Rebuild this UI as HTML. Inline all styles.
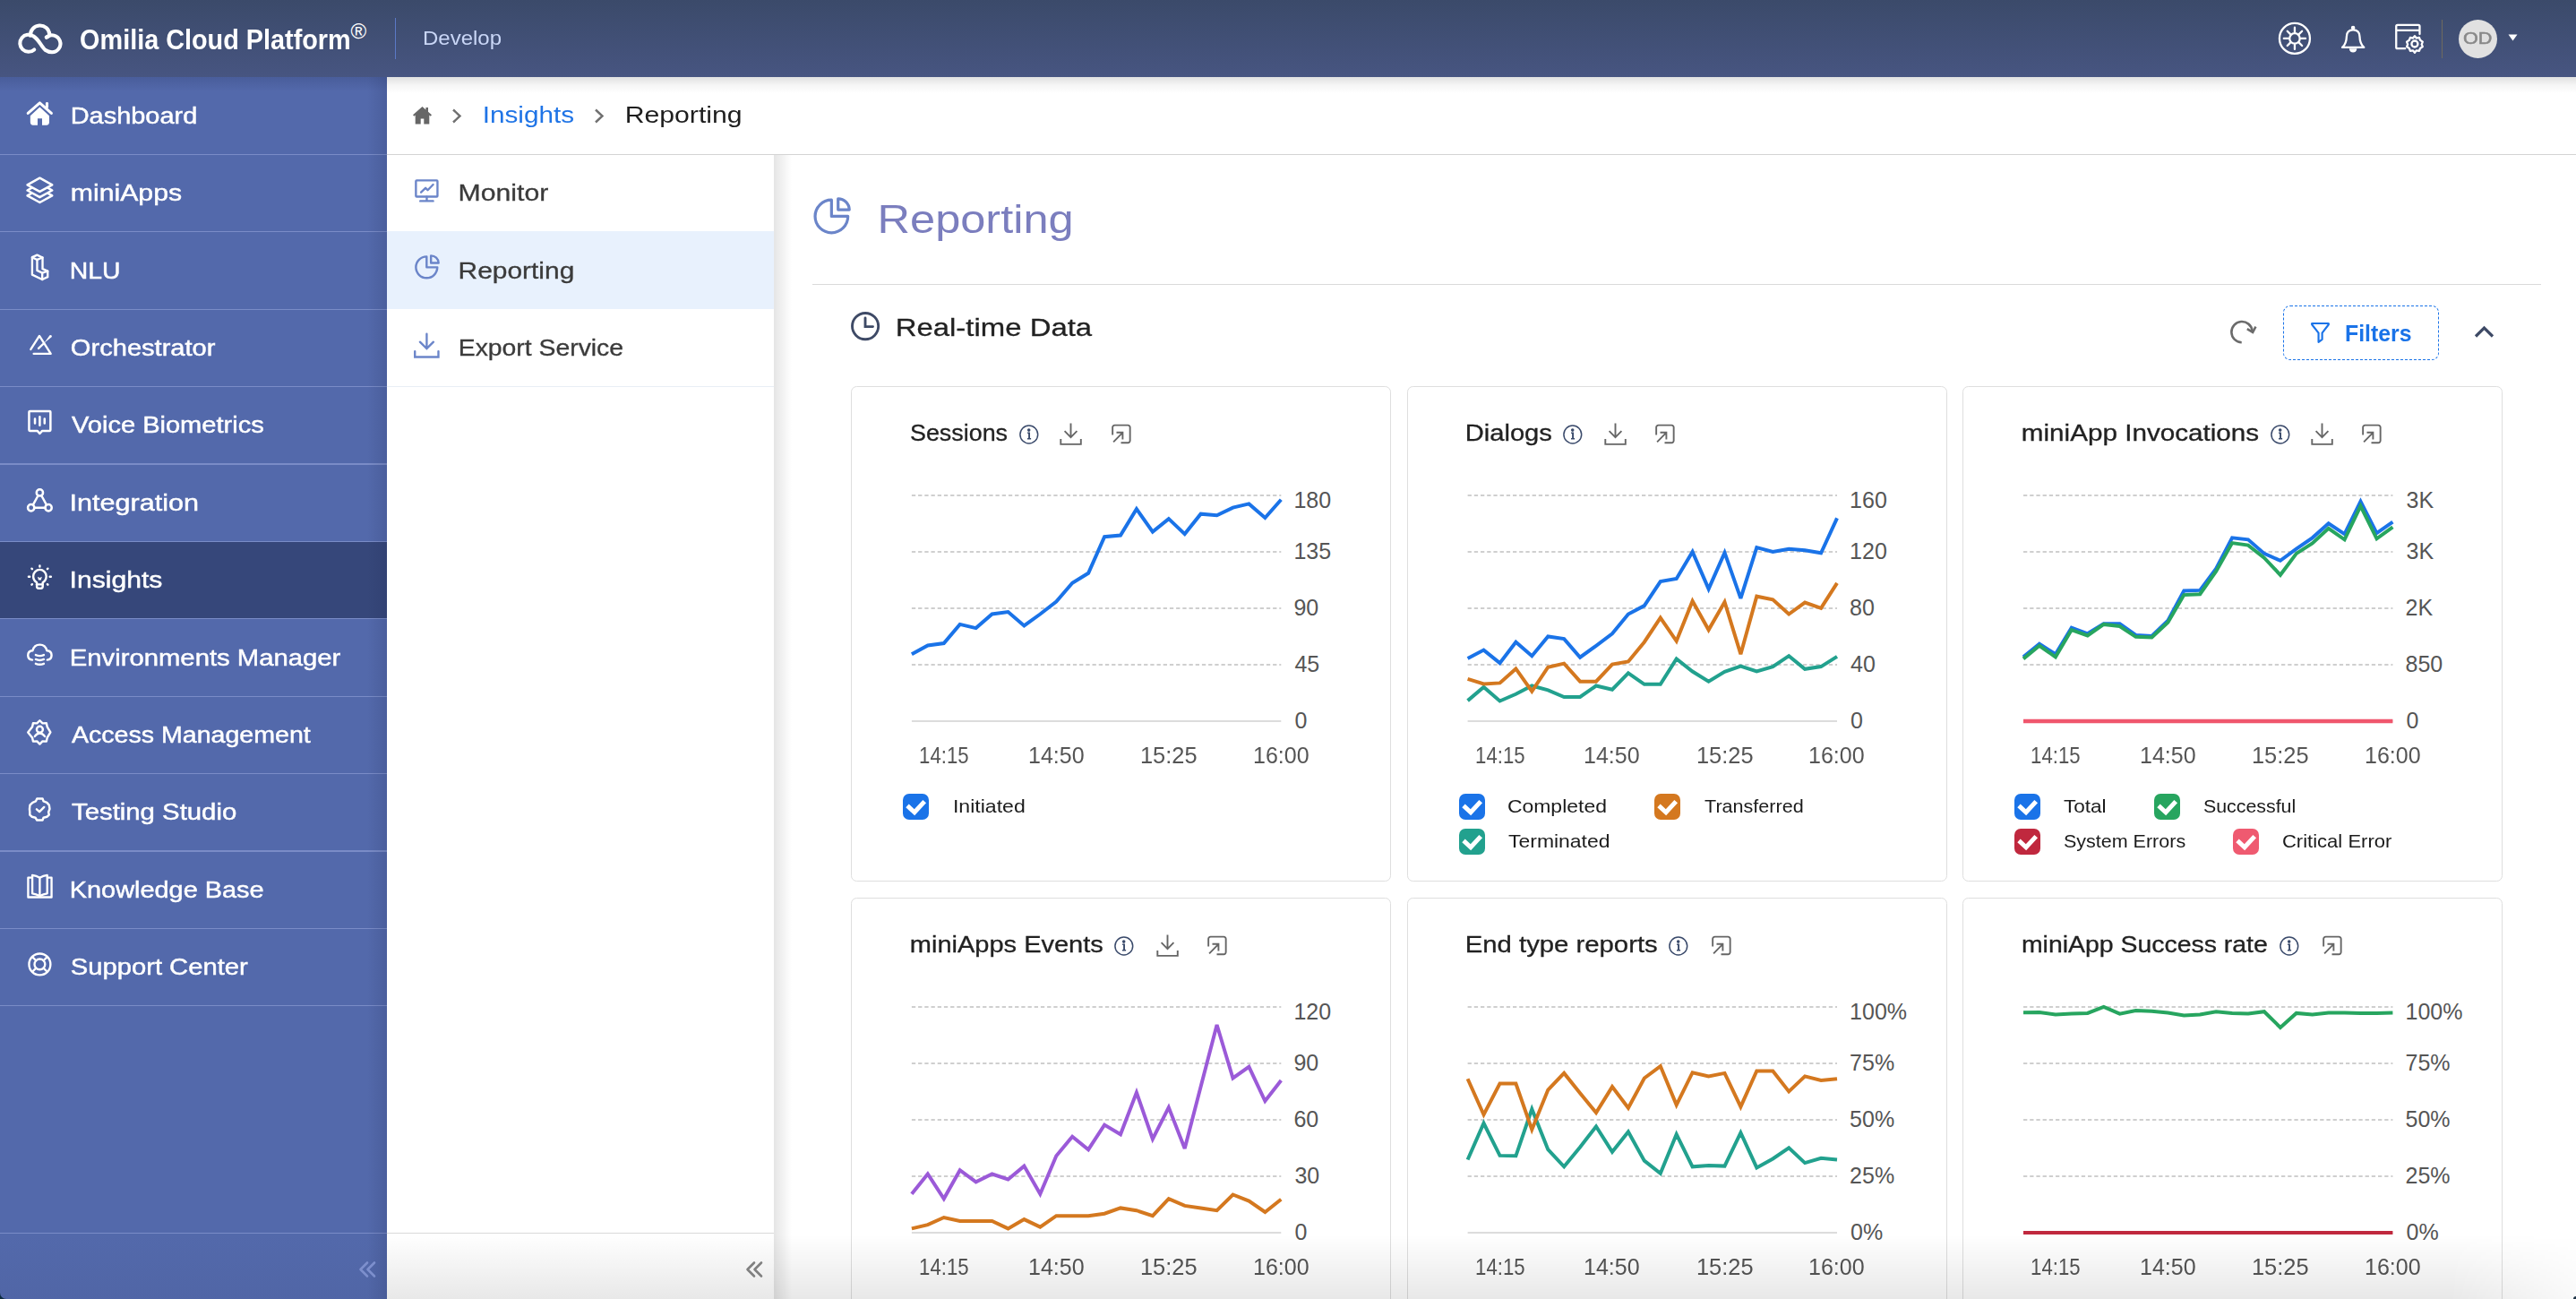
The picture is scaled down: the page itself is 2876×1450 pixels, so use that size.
<!DOCTYPE html>
<html><head><meta charset="utf-8"><style>
*{box-sizing:border-box;margin:0;padding:0}
html,body{width:2876px;height:1450px;overflow:hidden;background:#fff}
body{position:relative;font-family:"Liberation Sans",sans-serif}
.t{position:absolute;white-space:nowrap;line-height:1}
.ic{position:absolute;overflow:visible}
.cb{position:absolute;width:29px;height:29px;border-radius:7px}
.cb svg{position:absolute;left:0;top:0}
#hdr{position:absolute;left:0;top:0;width:2876px;height:86px;background:linear-gradient(180deg,#3b4a6a 0%,#475581 100%)}
#side{position:absolute;left:0;top:86px;width:432px;height:1364px;background:#5369ab;border-bottom-left-radius:7px}
.sep{position:absolute;left:0;width:432px;height:1.3px;background:#7a8cc7}
#sec{position:absolute;left:432px;top:173.3px;width:432px;height:1277px;background:#fff}
.sec2{position:absolute;left:432px;width:432px;height:1px;background:#e9eef5}
.card{position:absolute;width:603px;border:1.1px solid #dedede;border-radius:6.5px;background:#fff}
</style></head><body>
<div id="hdr"></div>
<svg class="ic" style="left:15px;top:20px;width:60px;height:46px" viewBox="0 0 1694 1299"><path d="M655 1000A270 270 0 1 1 630 576C800 670 870 900 1000 1010Q1100 1080 1215 1080A267 267 0 1 0 1040 610" fill="none" stroke="#fff" stroke-width="115" stroke-linecap="round"/><path d="M535 560A301 301 0 0 1 1137 520Q1130 575 1040 610" fill="none" stroke="#fff" stroke-width="115" stroke-linecap="round"/></svg>
<div class="t" style="left:391.5px;top:23px;font-size:24px;color:#fff">&#174;</div>
<div style="position:absolute;left:441px;top:20.4px;width:1.3px;height:46px;background:#5b79c6"></div>
<!-- header right icons -->
<svg class="ic" style="left:2538px;top:20px;width:48px;height:48px" viewBox="0 0 1299 1299"><g fill="none" stroke="#fff" stroke-width="62" stroke-linecap="round"><circle cx="648" cy="620" r="460"/><circle cx="648" cy="620" r="155"/><path d="M648 290V430M648 810V945M320 620H460M835 620H975M425 400L510 485M785 755L870 840M425 840L510 755M785 485L870 400"/></g></svg>
<svg class="ic" style="left:2604px;top:20px;width:48px;height:48px" viewBox="0 0 1299 1299"><g fill="none" stroke="#fff" stroke-width="62" stroke-linejoin="round"><path d="M625 360Q435 360 430 560Q425 780 300 890H955Q830 780 825 560Q820 360 625 360Z"/></g><circle cx="625" cy="300" r="62" fill="#fff"/><path d="M510 925A115 115 0 0 0 740 925Z" fill="#fff"/></svg>
<svg class="ic" style="left:2666px;top:20px;width:48px;height:48px" viewBox="0 0 1299 1299"><g fill="none" stroke="#fff" stroke-width="62" stroke-linecap="round" stroke-linejoin="round"><path d="M520 925H290Q250 925 250 885V255Q250 215 290 215H920Q960 215 960 255V490M250 375H940"/><path d="M810 545L860 610L945 590L975 670L1050 720L1020 800L1050 870L975 920L945 1000L860 985L810 1050L760 985L675 1000L645 920L570 870L600 800L570 720L645 670L675 590L760 610Z"/><circle cx="810" cy="785" r="95"/></g></svg>
<div style="position:absolute;left:2725.5px;top:22px;width:1.3px;height:43px;background:#6e6a5e"></div>
<div style="position:absolute;left:2745px;top:22px;width:43px;height:43px;border-radius:50%;background:#e1e1e1"></div>
<svg class="ic" style="left:2800px;top:38px;width:11px;height:8px" viewBox="0 0 11 8"><path d="M0.5 0.5H10.5L5.5 7.5Z" fill="#fff"/></svg>

<div style="position:absolute;left:0;top:1420px;width:20px;height:30px;background:#0b2b3f"></div>
<div id="side"></div>
<div style="position:absolute;left:0;top:86px;width:432px;height:16px;background:linear-gradient(180deg,rgba(20,30,70,0.16),rgba(20,30,70,0))"></div>
<div style="position:absolute;left:0;top:604.4px;width:432px;height:85.8px;background:#36477a"></div>
<div class="sep" style="top:171.8px"></div><div class="sep" style="top:258.2px"></div><div class="sep" style="top:344.6px"></div><div class="sep" style="top:431.0px"></div><div class="sep" style="top:517.4px"></div><div class="sep" style="top:603.8px"></div><div class="sep" style="top:690.2px"></div><div class="sep" style="top:776.6px"></div><div class="sep" style="top:863.0px"></div><div class="sep" style="top:949.4px"></div><div class="sep" style="top:1035.8px"></div><div class="sep" style="top:1122.2px"></div>
<div class="sep" style="top:1375.6px"></div>
<div style="position:absolute;left:410px;top:86px;width:22px;height:1364px;background:linear-gradient(90deg,rgba(30,40,80,0) 0%,rgba(30,40,80,0.16) 100%)"></div>
<div style="position:absolute;left:0;top:1376px;width:432px;height:74px;background:linear-gradient(180deg,rgba(40,50,90,0) 0%,rgba(40,50,90,0.06) 100%)"></div>
<svg class="ic" style="left:400px;top:1408px;width:20px;height:18px" viewBox="0 0 20 18"><path d="M10 1.5L2.5 9L10 16.5M18 1.5L10.5 9L18 16.5" fill="none" stroke="#7d8fcd" stroke-width="2.6" stroke-linecap="round" stroke-linejoin="round"/></svg>
<svg class="ic" style="left:25.0px;top:105.0px;width:45px;height:45px" viewBox="0 0 1299 1299"><path d="M180 620L560 285L935 620" fill="none" stroke="#fff" stroke-width="88" stroke-linecap="round" stroke-linejoin="round"/><rect x="748" y="262" width="90" height="200" rx="40" fill="#fff"/><path d="M255 700L560 415L865 700V910Q865 1000 775 1000H635V785H490V1000H345Q255 1000 255 910Z" fill="#fff"/></svg><svg class="ic" style="left:25.0px;top:190.0px;width:45px;height:45px" viewBox="0 0 1299 1299"><g fill="none" stroke="#fff" stroke-linecap="round" stroke-linejoin="round" stroke-width="72"><path d="M560 250L960 475L560 690L160 475Z"/><path d="M290 575L160 650L560 870L960 650L830 575"/><path d="M290 745L160 820L560 1040L960 820L830 745"/></g></svg><svg class="ic" style="left:25.0px;top:278.0px;width:45px;height:45px" viewBox="0 0 1299 1299"><g fill="none" stroke="#fff" stroke-linecap="round" stroke-linejoin="round" stroke-width="68"><path d="M315 265L475 192L650 275V640L815 712V900L640 982L315 825Z"/><path d="M315 265L475 345L650 275"/><path d="M475 345V690L640 770L815 712"/><path d="M640 770V982"/></g></svg><svg class="ic" style="left:25.0px;top:365.0px;width:45px;height:45px" viewBox="0 0 1299 1299"><g fill="none" stroke="#fff" stroke-linecap="round" stroke-linejoin="round" stroke-width="68"><path d="M270 720L548 285L915 862H365"/><path d="M520 690L700 520"/></g><path d="M700 520L880 265Q960 250 950 320L760 470Z" fill="#fff"/></svg><svg class="ic" style="left:25.0px;top:452.0px;width:45px;height:45px" viewBox="0 0 1299 1299"><g fill="none" stroke="#fff" stroke-linecap="round" stroke-linejoin="round" stroke-width="72"><path d="M250 200H880Q905 200 905 225V810Q905 835 880 835H640L560 925L480 835H240Q215 835 215 810V225Q215 200 250 200Z"/><path d="M405 450V590M560 385V660M715 450V590"/></g></svg><svg class="ic" style="left:25.0px;top:538.0px;width:45px;height:45px" viewBox="0 0 1299 1299"><g fill="none" stroke="#fff" stroke-linecap="round" stroke-linejoin="round" stroke-width="72"><circle cx="560" cy="345" r="105"/><circle cx="280" cy="830" r="105"/><circle cx="840" cy="830" r="105"/><path d="M505 440L345 730M615 440L775 730M385 830H735"/></g></svg><svg class="ic" style="left:25.0px;top:625.0px;width:45px;height:45px" viewBox="0 0 1299 1299"><g fill="none" stroke="#fff" stroke-linecap="round" stroke-linejoin="round" stroke-width="70"><path d="M465 730Q350 650 350 525A210 210 0 0 1 770 525Q770 650 655 730V860Q655 915 600 915H520Q465 915 465 860Z"/><path d="M465 790H655"/><path d="M560 190V215M300 280L315 295M820 280L805 295M200 540H235M885 540H920M300 800L315 785M820 800L805 785"/></g><path d="M490 540L560 580L630 540L600 650H520Z" fill="#fff"/></svg><svg class="ic" style="left:25.0px;top:711.0px;width:45px;height:45px" viewBox="0 0 1299 1299"><g fill="none" stroke="#fff" stroke-linecap="round" stroke-linejoin="round" stroke-width="70"><path d="M320 740Q180 720 180 590Q180 450 330 440Q380 250 560 250Q740 250 790 440Q940 450 940 590Q940 720 800 740"/><path d="M430 580Q560 640 690 580M430 720Q560 780 690 720M430 860Q560 920 690 860"/></g></svg><svg class="ic" style="left:25.0px;top:798.0px;width:45px;height:45px" viewBox="0 0 1299 1299"><g fill="none" stroke="#fff" stroke-linecap="round" stroke-linejoin="round" stroke-width="70"><path d="M560 180L650 270L775 265L800 385L905 560L800 735L775 855L650 850L560 940L470 850L345 855L320 735L180 560L320 385L345 265L470 270Z"/><circle cx="560" cy="470" r="100"/><path d="M400 690Q470 590 560 590Q650 590 720 690"/></g></svg><svg class="ic" style="left:25.0px;top:884.0px;width:45px;height:45px" viewBox="0 0 1299 1299"><g fill="none" stroke="#fff" stroke-linecap="round" stroke-linejoin="round" stroke-width="70"><path d="M470 215H650L680 300L790 345L860 420L880 550L840 650L860 740L790 800L680 830L650 910H470L420 830L310 800L240 740L240 650L230 550L245 420L330 340L430 300Z"/><path d="M460 560L550 640L700 490"/></g></svg><svg class="ic" style="left:25.0px;top:971.0px;width:45px;height:45px" viewBox="0 0 1299 1299"><g fill="none" stroke="#fff" stroke-linecap="round" stroke-linejoin="round" stroke-width="68"><path d="M300 250H185V880H940V250H815"/><path d="M320 170Q450 190 560 250Q670 190 800 170V760Q680 780 560 840Q440 780 320 760Z"/><path d="M560 250V840"/></g></svg><svg class="ic" style="left:25.0px;top:1057.0px;width:45px;height:45px" viewBox="0 0 1299 1299"><g fill="none" stroke="#fff" stroke-linecap="round" stroke-linejoin="round" stroke-width="68"><circle cx="560" cy="560" r="345"/><circle cx="560" cy="560" r="170"/><path d="M320 320L440 440M800 320L680 440M320 800L440 680M800 800L680 680"/></g></svg>

<!-- breadcrumb -->
<div style="position:absolute;left:432px;top:86px;width:2444px;height:87px;background:#fff;border-bottom:1.2px solid #d4d4d4"></div>
<div style="position:absolute;left:432px;top:86px;width:2444px;height:18px;background:linear-gradient(180deg,rgba(0,0,0,0.12),rgba(0,0,0,0.04) 50%,rgba(0,0,0,0))"></div>
<svg class="ic" style="left:460px;top:118px;width:23px;height:21px" viewBox="0 0 23 21"><path d="M11.5 1L1 10.3l1.3 1.4 1.4-1.2V20.5h6v-6h3.6v6h6V10.5l1.4 1.2L22 10.3 18 6.8V2h-2.6v2.5Z" fill="#666"/></svg>
<svg class="ic" style="left:504px;top:121px;width:12px;height:17px" viewBox="0 0 12 17"><path d="M2 1.5L9.5 8.5L2 15.5" fill="none" stroke="#707070" stroke-width="2.4"/></svg>
<svg class="ic" style="left:663px;top:121px;width:12px;height:17px" viewBox="0 0 12 17"><path d="M2 1.5L9.5 8.5L2 15.5" fill="none" stroke="#707070" stroke-width="2.4"/></svg>

<!-- secondary nav -->
<div id="sec"></div>
<div style="position:absolute;left:432px;top:258.4px;width:432px;height:86.6px;background:#e8f1fd"></div>
<div class="sec2" style="top:431px"></div>
<div class="sec2" style="top:1376px;background:#d9d9d9"></div>
<div style="position:absolute;left:432px;top:1377px;width:432px;height:73px;background:linear-gradient(180deg,rgba(0,0,0,0) 0%,rgba(0,0,0,0.09) 100%)"></div>
<svg class="ic" style="left:832px;top:1408px;width:20px;height:18px" viewBox="0 0 20 18"><path d="M10 1.5L2.5 9L10 16.5M18 1.5L10.5 9L18 16.5" fill="none" stroke="#808080" stroke-width="2.6" stroke-linecap="round" stroke-linejoin="round"/></svg>
<div style="position:absolute;left:864px;top:173.3px;width:20px;height:1277px;background:linear-gradient(90deg,rgba(0,0,0,0.10),rgba(0,0,0,0))"></div>
<svg class="ic" style="left:455px;top:192px;width:45px;height:45px" viewBox="0 0 1299 1299"><g fill="none" stroke="#6b85c9" stroke-width="68" stroke-linecap="round" stroke-linejoin="round"><rect x="270" y="270" width="695" height="525" rx="25"/><path d="M620 800V930M410 935H825M435 655L580 515L650 585L825 405"/></g></svg>
<svg class="ic" style="left:455px;top:276px;width:45px;height:45px" viewBox="0 0 1299 1299"><g fill="none" stroke="#6b85c9" stroke-width="70" stroke-linejoin="round"><path d="M615 300A345 345 0 1 0 960 645H615Z"/><path d="M755 270V505H1000A245 245 0 0 0 755 270Z"/></g></svg>
<svg class="ic" style="left:455px;top:363px;width:45px;height:45px" viewBox="0 0 1299 1299"><g fill="none" stroke="#6b85c9" stroke-width="68" stroke-linecap="round"><path d="M618 280V740M400 540L618 755L835 540M237 840V1025H995V840"/></g></svg>

<!-- main title -->
<svg class="ic" style="left:900px;top:212px;width:58px;height:58px" viewBox="0 0 1299 1299"><g fill="none" stroke="#6b85c9" stroke-width="72" stroke-linejoin="round"><path d="M635 250A410 410 0 1 0 1045 660H635Z"/><path d="M800 220V495H1080A280 280 0 0 0 800 220Z"/></g></svg>
<div style="position:absolute;left:907px;top:316.6px;width:1930px;height:1.1px;background:#dadada"></div>
<svg class="ic" style="left:942px;top:340px;width:48px;height:48px" viewBox="0 0 1299 1299"><g fill="none" stroke="#3e4a66" stroke-width="78" stroke-linecap="round"><circle cx="652" cy="652" r="395"/><path d="M650 405V665H880"/></g></svg>
<svg class="ic" style="left:2480px;top:347px;width:48px;height:48px" viewBox="0 0 1299 1299"><g fill="none" stroke="#6b6b6b" stroke-width="70"><path d="M615 955A315 315 0 1 1 935 600"/><path d="M780 545L950 645L1040 480"/></g></svg>
<div style="position:absolute;left:2549px;top:341px;width:174px;height:61px;border:1.6px dashed #1a73e8;border-radius:8px"></div>
<svg class="ic" style="left:2566px;top:347px;width:48px;height:48px" viewBox="0 0 1299 1299"><g fill="none" stroke="#1a73e8" stroke-width="58" stroke-linejoin="round"><path d="M420 380H900Q930 380 910 420L720 665V860L610 945V665L415 420Q395 380 420 380Z"/></g></svg>
<svg class="ic" style="left:2762px;top:362px;width:23px;height:17px" viewBox="0 0 23 17"><path d="M2 13.5L11.5 4L21 13.5" fill="none" stroke="#3e4a66" stroke-width="3.2"/></svg>

<!-- cards -->
<div class="card" style="left:950px;top:430.9px;height:553.2px"></div>
<div class="card" style="left:1570.9px;top:430.9px;height:553.2px"></div>
<div class="card" style="left:2191.4px;top:430.9px;height:553.2px"></div>
<div class="card" style="left:950px;top:1001.8px;height:600px"></div>
<div class="card" style="left:1570.9px;top:1001.8px;height:600px"></div>
<div class="card" style="left:2191.4px;top:1001.8px;height:600px"></div>
<svg class="ic" style="left:0;top:0;width:2876px;height:1450px" viewBox="0 0 2876 1450"><line x1="1017.9" y1="553.0" x2="1430.3" y2="553.0" stroke="#cfcfcf" stroke-width="2" stroke-dasharray="4.3 2.9"/><line x1="1017.9" y1="616.0" x2="1430.3" y2="616.0" stroke="#cfcfcf" stroke-width="2" stroke-dasharray="4.3 2.9"/><line x1="1017.9" y1="679.0" x2="1430.3" y2="679.0" stroke="#cfcfcf" stroke-width="2" stroke-dasharray="4.3 2.9"/><line x1="1017.9" y1="742.0" x2="1430.3" y2="742.0" stroke="#cfcfcf" stroke-width="2" stroke-dasharray="4.3 2.9"/><line x1="1017.9" y1="805.0" x2="1430.3" y2="805.0" stroke="#dcdcdc" stroke-width="2"/><polyline points="1017.9,730.2 1035.8,720.4 1053.8,718.1 1071.7,696.9 1089.6,701.1 1107.6,685.5 1125.5,683.0 1143.4,698.4 1161.3,685.5 1179.3,671.6 1197.2,650.8 1215.1,639.8 1233.1,599.2 1251.0,597.6 1268.9,568.1 1286.9,593.6 1304.8,579.1 1322.7,596.1 1340.6,573.7 1358.6,575.3 1376.5,566.6 1394.4,562.4 1412.4,578.0 1430.3,557.7" fill="none" stroke="#1a73e8" stroke-width="4" stroke-linejoin="miter" stroke-miterlimit="3"/><line x1="1638.6" y1="553.0" x2="2051.0" y2="553.0" stroke="#cfcfcf" stroke-width="2" stroke-dasharray="4.3 2.9"/><line x1="1638.6" y1="616.0" x2="2051.0" y2="616.0" stroke="#cfcfcf" stroke-width="2" stroke-dasharray="4.3 2.9"/><line x1="1638.6" y1="679.0" x2="2051.0" y2="679.0" stroke="#cfcfcf" stroke-width="2" stroke-dasharray="4.3 2.9"/><line x1="1638.6" y1="742.0" x2="2051.0" y2="742.0" stroke="#cfcfcf" stroke-width="2" stroke-dasharray="4.3 2.9"/><line x1="1638.6" y1="805.0" x2="2051.0" y2="805.0" stroke="#dcdcdc" stroke-width="2"/><polyline points="1638.6,782.1 1656.5,767.0 1674.5,782.5 1692.4,774.8 1710.3,765.5 1728.3,770.3 1746.2,778.0 1764.1,778.0 1782.0,765.5 1800.0,769.7 1817.9,751.4 1835.8,763.8 1853.8,763.8 1871.7,735.4 1889.6,749.5 1907.6,760.7 1925.5,749.9 1943.4,743.7 1961.3,749.5 1979.3,744.1 1997.2,732.2 2015.1,746.8 2033.1,744.1 2051.0,732.9" fill="none" stroke="#22a18e" stroke-width="4" stroke-linejoin="miter" stroke-miterlimit="3"/><polyline points="1638.6,757.8 1656.5,763.4 1674.5,762.4 1692.4,746.4 1710.3,771.7 1728.3,744.7 1746.2,740.6 1764.1,760.7 1782.0,760.7 1800.0,741.6 1817.9,738.5 1835.8,716.7 1853.8,689.6 1871.7,715.6 1889.6,670.9 1907.6,703.1 1925.5,672.0 1943.4,730.2 1961.3,665.7 1979.3,669.3 1997.2,685.5 2015.1,672.6 2033.1,678.8 2051.0,650.8" fill="none" stroke="#d4781f" stroke-width="4" stroke-linejoin="miter" stroke-miterlimit="3"/><polyline points="1638.6,734.9 1656.5,725.6 1674.5,740.1 1692.4,716.7 1710.3,732.2 1728.3,710.4 1746.2,713.1 1764.1,733.7 1782.0,720.8 1800.0,707.3 1817.9,685.5 1835.8,676.1 1853.8,649.1 1871.7,646.0 1889.6,615.9 1907.6,657.4 1925.5,616.9 1943.4,667.8 1961.3,611.1 1979.3,615.9 1997.2,612.7 2015.1,614.2 2033.1,617.3 2051.0,578.4" fill="none" stroke="#1a73e8" stroke-width="4" stroke-linejoin="miter" stroke-miterlimit="3"/><line x1="2259.0" y1="553.0" x2="2671.4" y2="553.0" stroke="#cfcfcf" stroke-width="2" stroke-dasharray="4.3 2.9"/><line x1="2259.0" y1="616.0" x2="2671.4" y2="616.0" stroke="#cfcfcf" stroke-width="2" stroke-dasharray="4.3 2.9"/><line x1="2259.0" y1="679.0" x2="2671.4" y2="679.0" stroke="#cfcfcf" stroke-width="2" stroke-dasharray="4.3 2.9"/><line x1="2259.0" y1="742.0" x2="2671.4" y2="742.0" stroke="#cfcfcf" stroke-width="2" stroke-dasharray="4.3 2.9"/><line x1="2259.0" y1="805.0" x2="2671.4" y2="805.0" stroke="#dcdcdc" stroke-width="2"/><line x1="2259.0" y1="805.0" x2="2671.4" y2="805.0" stroke="#f0566d" stroke-width="4.5"/><polyline points="2259.0,733.3 2276.9,718.7 2294.9,730.2 2312.8,700.7 2330.7,707.3 2348.7,696.3 2366.6,696.3 2384.5,709.0 2402.4,710.0 2420.4,692.8 2438.3,659.5 2456.2,658.9 2474.2,634.6 2492.1,600.3 2510.0,602.3 2527.9,617.9 2545.9,625.8 2563.8,612.7 2581.7,600.3 2599.7,584.3 2617.6,596.1 2635.5,559.7 2653.5,595.1 2671.4,582.6" fill="none" stroke="#1a73e8" stroke-width="4" stroke-linejoin="miter" stroke-miterlimit="3"/><polyline points="2259.0,735.4 2276.9,720.8 2294.9,733.3 2312.8,703.1 2330.7,709.4 2348.7,696.9 2366.6,699.0 2384.5,710.8 2402.4,711.5 2420.4,694.8 2438.3,664.1 2456.2,663.2 2474.2,637.7 2492.1,606.1 2510.0,608.6 2527.9,622.7 2545.9,641.8 2563.8,617.9 2581.7,606.5 2599.7,589.9 2617.6,602.3 2635.5,564.9 2653.5,601.3 2671.4,588.4" fill="none" stroke="#27a55f" stroke-width="4" stroke-linejoin="miter" stroke-miterlimit="3"/><line x1="1017.9" y1="1124.0" x2="1430.3" y2="1124.0" stroke="#cfcfcf" stroke-width="2" stroke-dasharray="4.3 2.9"/><line x1="1017.9" y1="1187.0" x2="1430.3" y2="1187.0" stroke="#cfcfcf" stroke-width="2" stroke-dasharray="4.3 2.9"/><line x1="1017.9" y1="1250.0" x2="1430.3" y2="1250.0" stroke="#cfcfcf" stroke-width="2" stroke-dasharray="4.3 2.9"/><line x1="1017.9" y1="1313.0" x2="1430.3" y2="1313.0" stroke="#cfcfcf" stroke-width="2" stroke-dasharray="4.3 2.9"/><line x1="1017.9" y1="1376.0" x2="1430.3" y2="1376.0" stroke="#dcdcdc" stroke-width="2"/><polyline points="1017.9,1371.4 1035.8,1367.1 1053.8,1359.0 1071.7,1362.9 1089.6,1362.9 1107.6,1362.9 1125.5,1371.4 1143.4,1361.1 1161.3,1369.6 1179.3,1357.2 1197.2,1357.2 1215.1,1357.2 1233.1,1354.7 1251.0,1348.4 1268.9,1351.2 1286.9,1357.2 1304.8,1338.1 1322.7,1345.9 1340.6,1348.4 1358.6,1351.2 1376.5,1333.5 1394.4,1340.6 1412.4,1353.0 1430.3,1338.8" fill="none" stroke="#d4781f" stroke-width="4" stroke-linejoin="miter" stroke-miterlimit="3"/><polyline points="1017.9,1332.8 1035.8,1310.5 1053.8,1338.1 1071.7,1306.2 1089.6,1319.3 1107.6,1310.5 1125.5,1316.5 1143.4,1301.6 1161.3,1332.8 1179.3,1290.3 1197.2,1268.7 1215.1,1283.2 1233.1,1255.6 1251.0,1266.2 1268.9,1219.5 1286.9,1271.5 1304.8,1236.1 1322.7,1282.1 1340.6,1213.1 1358.6,1144.0 1376.5,1203.5 1394.4,1190.8 1412.4,1229.0 1430.3,1206.0" fill="none" stroke="#9b5ad8" stroke-width="4" stroke-linejoin="miter" stroke-miterlimit="3"/><line x1="1638.6" y1="1124.0" x2="2051.0" y2="1124.0" stroke="#cfcfcf" stroke-width="2" stroke-dasharray="4.3 2.9"/><line x1="1638.6" y1="1187.0" x2="2051.0" y2="1187.0" stroke="#cfcfcf" stroke-width="2" stroke-dasharray="4.3 2.9"/><line x1="1638.6" y1="1250.0" x2="2051.0" y2="1250.0" stroke="#cfcfcf" stroke-width="2" stroke-dasharray="4.3 2.9"/><line x1="1638.6" y1="1313.0" x2="2051.0" y2="1313.0" stroke="#cfcfcf" stroke-width="2" stroke-dasharray="4.3 2.9"/><line x1="1638.6" y1="1376.0" x2="2051.0" y2="1376.0" stroke="#dcdcdc" stroke-width="2"/><polyline points="1638.6,1294.5 1656.5,1253.8 1674.5,1289.9 1692.4,1290.3 1710.3,1237.9 1728.3,1283.2 1746.2,1302.3 1764.1,1280.4 1782.0,1257.4 1800.0,1285.7 1817.9,1263.4 1835.8,1295.6 1853.8,1309.8 1871.7,1266.2 1889.6,1302.3 1907.6,1300.9 1925.5,1301.6 1943.4,1264.4 1961.3,1303.4 1979.3,1293.5 1997.2,1281.4 2015.1,1298.1 2033.1,1292.8 2051.0,1294.5" fill="none" stroke="#22a18e" stroke-width="4" stroke-linejoin="miter" stroke-miterlimit="3"/><polyline points="1638.6,1204.2 1656.5,1244.2 1674.5,1209.5 1692.4,1209.5 1710.3,1260.9 1728.3,1216.6 1746.2,1197.9 1764.1,1220.2 1782.0,1242.1 1800.0,1213.1 1817.9,1236.8 1835.8,1203.5 1853.8,1190.1 1871.7,1233.3 1889.6,1197.2 1907.6,1201.4 1925.5,1197.9 1943.4,1235.4 1961.3,1195.4 1979.3,1195.4 1997.2,1218.4 2015.1,1201.4 2033.1,1206.0 2051.0,1204.2" fill="none" stroke="#d4781f" stroke-width="4" stroke-linejoin="miter" stroke-miterlimit="3"/><line x1="2259.0" y1="1124.0" x2="2671.4" y2="1124.0" stroke="#cfcfcf" stroke-width="2" stroke-dasharray="4.3 2.9"/><line x1="2259.0" y1="1187.0" x2="2671.4" y2="1187.0" stroke="#cfcfcf" stroke-width="2" stroke-dasharray="4.3 2.9"/><line x1="2259.0" y1="1250.0" x2="2671.4" y2="1250.0" stroke="#cfcfcf" stroke-width="2" stroke-dasharray="4.3 2.9"/><line x1="2259.0" y1="1313.0" x2="2671.4" y2="1313.0" stroke="#cfcfcf" stroke-width="2" stroke-dasharray="4.3 2.9"/><line x1="2259.0" y1="1376.0" x2="2671.4" y2="1376.0" stroke="#dcdcdc" stroke-width="2"/><line x1="2259.0" y1="1376.0" x2="2671.4" y2="1376.0" stroke="#c0283e" stroke-width="4"/><polyline points="2259.0,1130.2 2276.9,1129.9 2294.9,1132.4 2312.8,1131.6 2330.7,1130.9 2348.7,1123.9 2366.6,1131.6 2384.5,1128.1 2402.4,1128.8 2420.4,1130.6 2438.3,1133.4 2456.2,1132.4 2474.2,1129.2 2492.1,1130.9 2510.0,1131.6 2527.9,1129.2 2545.9,1146.9 2563.8,1130.9 2581.7,1132.4 2599.7,1130.6 2617.6,1130.6 2635.5,1130.9 2653.5,1130.9 2671.4,1130.6" fill="none" stroke="#27a55f" stroke-width="4" stroke-linejoin="miter" stroke-miterlimit="3"/></svg>
<svg class="ic" style="left:1137.5px;top:473.8px;width:22px;height:22px" viewBox="0 0 22 22"><circle cx="10.8" cy="11" r="9.9" fill="none" stroke="#3a4a6b" stroke-width="1.5"/><circle cx="10.7" cy="6.1" r="1.8" fill="#3a4a6b"/><path d="M9.1 8.6h2.9v6.4h1.1v1.4H9v-1.4h1.1V10H9.1z" fill="#3a4a6b"/></svg><svg class="ic" style="left:1181.0px;top:472.0px;width:28px;height:26px" viewBox="0 0 28 26"><path d="M14.5 0.6V16.2M7.6 9.2l6.9 6.9 6.9-6.9M3.3 18v5.9h22.5V18" fill="none" stroke="#666" stroke-width="1.9"/></svg><svg class="ic" style="left:1238.7px;top:473.0px;width:26px;height:24px" viewBox="0 0 26 24"><path d="M3.15 12.4V4.05a2.4 2.4 0 0 1 2.4-2.4h14.7a2.4 2.4 0 0 1 2.4 2.4v14.8a2.4 2.4 0 0 1-2.4 2.4h-7.75M4.1 20.3L14.4 9.9M7.5 9.7h6.9v7.8" fill="none" stroke="#666" stroke-width="1.9"/></svg><svg class="ic" style="left:1745.0px;top:473.8px;width:22px;height:22px" viewBox="0 0 22 22"><circle cx="10.8" cy="11" r="9.9" fill="none" stroke="#3a4a6b" stroke-width="1.5"/><circle cx="10.7" cy="6.1" r="1.8" fill="#3a4a6b"/><path d="M9.1 8.6h2.9v6.4h1.1v1.4H9v-1.4h1.1V10H9.1z" fill="#3a4a6b"/></svg><svg class="ic" style="left:1788.9px;top:472.0px;width:28px;height:26px" viewBox="0 0 28 26"><path d="M14.5 0.6V16.2M7.6 9.2l6.9 6.9 6.9-6.9M3.3 18v5.9h22.5V18" fill="none" stroke="#666" stroke-width="1.9"/></svg><svg class="ic" style="left:1846.3px;top:473.0px;width:26px;height:24px" viewBox="0 0 26 24"><path d="M3.15 12.4V4.05a2.4 2.4 0 0 1 2.4-2.4h14.7a2.4 2.4 0 0 1 2.4 2.4v14.8a2.4 2.4 0 0 1-2.4 2.4h-7.75M4.1 20.3L14.4 9.9M7.5 9.7h6.9v7.8" fill="none" stroke="#666" stroke-width="1.9"/></svg><svg class="ic" style="left:2534.6px;top:473.8px;width:22px;height:22px" viewBox="0 0 22 22"><circle cx="10.8" cy="11" r="9.9" fill="none" stroke="#3a4a6b" stroke-width="1.5"/><circle cx="10.7" cy="6.1" r="1.8" fill="#3a4a6b"/><path d="M9.1 8.6h2.9v6.4h1.1v1.4H9v-1.4h1.1V10H9.1z" fill="#3a4a6b"/></svg><svg class="ic" style="left:2577.7px;top:472.0px;width:28px;height:26px" viewBox="0 0 28 26"><path d="M14.5 0.6V16.2M7.6 9.2l6.9 6.9 6.9-6.9M3.3 18v5.9h22.5V18" fill="none" stroke="#666" stroke-width="1.9"/></svg><svg class="ic" style="left:2635.1px;top:473.0px;width:26px;height:24px" viewBox="0 0 26 24"><path d="M3.15 12.4V4.05a2.4 2.4 0 0 1 2.4-2.4h14.7a2.4 2.4 0 0 1 2.4 2.4v14.8a2.4 2.4 0 0 1-2.4 2.4h-7.75M4.1 20.3L14.4 9.9M7.5 9.7h6.9v7.8" fill="none" stroke="#666" stroke-width="1.9"/></svg><svg class="ic" style="left:1243.5px;top:1044.8px;width:22px;height:22px" viewBox="0 0 22 22"><circle cx="10.8" cy="11" r="9.9" fill="none" stroke="#3a4a6b" stroke-width="1.5"/><circle cx="10.7" cy="6.1" r="1.8" fill="#3a4a6b"/><path d="M9.1 8.6h2.9v6.4h1.1v1.4H9v-1.4h1.1V10H9.1z" fill="#3a4a6b"/></svg><svg class="ic" style="left:1288.9px;top:1043.0px;width:28px;height:26px" viewBox="0 0 28 26"><path d="M14.5 0.6V16.2M7.6 9.2l6.9 6.9 6.9-6.9M3.3 18v5.9h22.5V18" fill="none" stroke="#666" stroke-width="1.9"/></svg><svg class="ic" style="left:1346.2px;top:1044.0px;width:26px;height:24px" viewBox="0 0 26 24"><path d="M3.15 12.4V4.05a2.4 2.4 0 0 1 2.4-2.4h14.7a2.4 2.4 0 0 1 2.4 2.4v14.8a2.4 2.4 0 0 1-2.4 2.4h-7.75M4.1 20.3L14.4 9.9M7.5 9.7h6.9v7.8" fill="none" stroke="#666" stroke-width="1.9"/></svg><svg class="ic" style="left:1863.2px;top:1044.8px;width:22px;height:22px" viewBox="0 0 22 22"><circle cx="10.8" cy="11" r="9.9" fill="none" stroke="#3a4a6b" stroke-width="1.5"/><circle cx="10.7" cy="6.1" r="1.8" fill="#3a4a6b"/><path d="M9.1 8.6h2.9v6.4h1.1v1.4H9v-1.4h1.1V10H9.1z" fill="#3a4a6b"/></svg><svg class="ic" style="left:1908.5px;top:1044.0px;width:26px;height:24px" viewBox="0 0 26 24"><path d="M3.15 12.4V4.05a2.4 2.4 0 0 1 2.4-2.4h14.7a2.4 2.4 0 0 1 2.4 2.4v14.8a2.4 2.4 0 0 1-2.4 2.4h-7.75M4.1 20.3L14.4 9.9M7.5 9.7h6.9v7.8" fill="none" stroke="#666" stroke-width="1.9"/></svg><svg class="ic" style="left:2545.3px;top:1044.8px;width:22px;height:22px" viewBox="0 0 22 22"><circle cx="10.8" cy="11" r="9.9" fill="none" stroke="#3a4a6b" stroke-width="1.5"/><circle cx="10.7" cy="6.1" r="1.8" fill="#3a4a6b"/><path d="M9.1 8.6h2.9v6.4h1.1v1.4H9v-1.4h1.1V10H9.1z" fill="#3a4a6b"/></svg><svg class="ic" style="left:2590.6px;top:1044.0px;width:26px;height:24px" viewBox="0 0 26 24"><path d="M3.15 12.4V4.05a2.4 2.4 0 0 1 2.4-2.4h14.7a2.4 2.4 0 0 1 2.4 2.4v14.8a2.4 2.4 0 0 1-2.4 2.4h-7.75M4.1 20.3L14.4 9.9M7.5 9.7h6.9v7.8" fill="none" stroke="#666" stroke-width="1.9"/></svg><div class="cb" style="left:1008.3px;top:885.9px;background:#1a73e8"><svg width="29" height="29" viewBox="0 0 29 29"><path d="M5 13.4L13 20.8L24.2 8.6" fill="none" stroke="#fff" stroke-width="5"/></svg></div><div class="cb" style="left:1629.0px;top:885.9px;background:#1a73e8"><svg width="29" height="29" viewBox="0 0 29 29"><path d="M5 13.4L13 20.8L24.2 8.6" fill="none" stroke="#fff" stroke-width="5"/></svg></div><div class="cb" style="left:1847.3px;top:885.9px;background:#d4781f"><svg width="29" height="29" viewBox="0 0 29 29"><path d="M5 13.4L13 20.8L24.2 8.6" fill="none" stroke="#fff" stroke-width="5"/></svg></div><div class="cb" style="left:1629.0px;top:924.9px;background:#22a18e"><svg width="29" height="29" viewBox="0 0 29 29"><path d="M5 13.4L13 20.8L24.2 8.6" fill="none" stroke="#fff" stroke-width="5"/></svg></div><div class="cb" style="left:2249.3px;top:885.9px;background:#1a73e8"><svg width="29" height="29" viewBox="0 0 29 29"><path d="M5 13.4L13 20.8L24.2 8.6" fill="none" stroke="#fff" stroke-width="5"/></svg></div><div class="cb" style="left:2404.7px;top:885.9px;background:#27a55f"><svg width="29" height="29" viewBox="0 0 29 29"><path d="M5 13.4L13 20.8L24.2 8.6" fill="none" stroke="#fff" stroke-width="5"/></svg></div><div class="cb" style="left:2249.3px;top:924.9px;background:#c0283e"><svg width="29" height="29" viewBox="0 0 29 29"><path d="M5 13.4L13 20.8L24.2 8.6" fill="none" stroke="#fff" stroke-width="5"/></svg></div><div class="cb" style="left:2493.1px;top:924.9px;background:#ef5a70"><svg width="29" height="29" viewBox="0 0 29 29"><path d="M5 13.4L13 20.8L24.2 8.6" fill="none" stroke="#fff" stroke-width="5"/></svg></div>
<div class="t" style="left:89.10px;top:29.05px;font-size:31.83px;color:#ffffff;font-weight:700;letter-spacing:0.000px;transform:scaleX(0.9053);transform-origin:1.00px 0;">Omilia Cloud Platform</div>
<div class="t" style="left:2750.00px;top:33.64px;font-size:18.02px;color:#888888;font-weight:400;letter-spacing:0.000px;transform:scaleX(1.1994);transform-origin:0.00px 0;-webkit-text-stroke:0.5px #888;">OD</div>
<div class="t" style="left:471.50px;top:32.22px;font-size:22.53px;color:#c9d6f6;font-weight:400;letter-spacing:0.000px;transform:scaleX(1.0668);transform-origin:1.00px 0;">Develop</div>
<div class="t" style="left:79.00px;top:116.79px;font-size:25.29px;color:#ffffff;font-weight:500;letter-spacing:0.000px;transform:scaleX(1.1441);transform-origin:2.00px 0;-webkit-text-stroke:0.45px #ffffff;">Dashboard</div>
<div class="t" style="left:79.40px;top:203.19px;font-size:25.29px;color:#ffffff;font-weight:500;letter-spacing:0.000px;transform:scaleX(1.1951);transform-origin:1.00px 0;-webkit-text-stroke:0.45px #ffffff;">miniApps</div>
<div class="t" style="left:78.40px;top:289.59px;font-size:25.29px;color:#ffffff;font-weight:500;letter-spacing:0.000px;transform:scaleX(1.1222);transform-origin:2.00px 0;-webkit-text-stroke:0.45px #ffffff;">NLU</div>
<div class="t" style="left:79.40px;top:375.99px;font-size:25.29px;color:#ffffff;font-weight:500;letter-spacing:0.000px;transform:scaleX(1.1505);transform-origin:1.00px 0;-webkit-text-stroke:0.45px #ffffff;">Orchestrator</div>
<div class="t" style="left:79.70px;top:462.39px;font-size:25.29px;color:#ffffff;font-weight:500;letter-spacing:0.000px;transform:scaleX(1.1491);transform-origin:0.00px 0;-webkit-text-stroke:0.45px #ffffff;">Voice Biometrics</div>
<div class="t" style="left:78.40px;top:548.79px;font-size:25.29px;color:#ffffff;font-weight:500;letter-spacing:0.000px;transform:scaleX(1.2078);transform-origin:2.00px 0;-webkit-text-stroke:0.45px #ffffff;">Integration</div>
<div class="t" style="left:78.40px;top:635.19px;font-size:25.29px;color:#ffffff;font-weight:500;letter-spacing:0.000px;transform:scaleX(1.1907);transform-origin:2.00px 0;-webkit-text-stroke:0.45px #ffffff;">Insights</div>
<div class="t" style="left:78.40px;top:721.59px;font-size:25.29px;color:#ffffff;font-weight:500;letter-spacing:0.000px;transform:scaleX(1.1581);transform-origin:2.00px 0;-webkit-text-stroke:0.45px #ffffff;">Environments Manager</div>
<div class="t" style="left:79.70px;top:807.99px;font-size:25.29px;color:#ffffff;font-weight:500;letter-spacing:0.000px;transform:scaleX(1.1298);transform-origin:0.00px 0;-webkit-text-stroke:0.45px #ffffff;">Access Management</div>
<div class="t" style="left:79.50px;top:894.39px;font-size:25.29px;color:#ffffff;font-weight:500;letter-spacing:0.000px;transform:scaleX(1.1601);transform-origin:0.00px 0;-webkit-text-stroke:0.45px #ffffff;">Testing Studio</div>
<div class="t" style="left:78.40px;top:980.79px;font-size:25.29px;color:#ffffff;font-weight:500;letter-spacing:0.000px;transform:scaleX(1.1431);transform-origin:2.00px 0;-webkit-text-stroke:0.45px #ffffff;">Knowledge Base</div>
<div class="t" style="left:78.50px;top:1067.19px;font-size:25.29px;color:#ffffff;font-weight:500;letter-spacing:0.000px;transform:scaleX(1.1539);transform-origin:1.00px 0;-webkit-text-stroke:0.45px #ffffff;">Support Center</div>
<div class="t" style="left:539.00px;top:116.19px;font-size:25.87px;color:#1f74e6;font-weight:400;letter-spacing:0.000px;transform:scaleX(1.1486);transform-origin:2.00px 0;">Insights</div>
<div class="t" style="left:698.00px;top:116.19px;font-size:25.87px;color:#1e1e1e;font-weight:400;letter-spacing:0.000px;transform:scaleX(1.1679);transform-origin:2.00px 0;">Reporting</div>
<div class="t" style="left:511.60px;top:202.96px;font-size:24.86px;color:#3b3b3b;font-weight:500;letter-spacing:0.000px;transform:scaleX(1.2151);transform-origin:2.00px 0;-webkit-text-stroke:0.3px #3b3b3b;">Monitor</div>
<div class="t" style="left:511.60px;top:289.96px;font-size:24.86px;color:#3b3b3b;font-weight:500;letter-spacing:0.000px;transform:scaleX(1.2030);transform-origin:2.00px 0;-webkit-text-stroke:0.3px #3b3b3b;">Reporting</div>
<div class="t" style="left:511.60px;top:376.36px;font-size:24.86px;color:#3b3b3b;font-weight:500;letter-spacing:0.000px;transform:scaleX(1.1403);transform-origin:2.00px 0;-webkit-text-stroke:0.3px #3b3b3b;">Export Service</div>
<div class="t" style="left:980.00px;top:223.06px;font-size:44.33px;color:#7b7ebe;font-weight:400;letter-spacing:0.000px;transform:scaleX(1.1396);transform-origin:3.00px 0;">Reporting</div>
<div class="t" style="left:1000.30px;top:350.68px;font-size:28.49px;color:#222222;font-weight:500;letter-spacing:0.000px;transform:scaleX(1.1552);transform-origin:2.00px 0;-webkit-text-stroke:0.3px #222222;">Real-time Data</div>
<div class="t" style="left:2618.40px;top:359.66px;font-size:25.44px;color:#1a73e8;font-weight:700;letter-spacing:0.000px;transform:scaleX(0.9754);transform-origin:1.00px 0;">Filters</div>
<div class="t" style="left:1016.20px;top:471.44px;font-size:25.58px;color:#222222;font-weight:500;letter-spacing:0.000px;transform:scaleX(1.0510);transform-origin:1.00px 0;-webkit-text-stroke:0.3px #222222;">Sessions</div>
<div class="t" style="left:1444.40px;top:546.23px;font-size:25.00px;color:#555555;font-weight:400;letter-spacing:0.000px;">180</div>
<div class="t" style="left:1444.40px;top:603.43px;font-size:25.00px;color:#555555;font-weight:400;letter-spacing:0.000px;">135</div>
<div class="t" style="left:1444.40px;top:666.43px;font-size:25.00px;color:#555555;font-weight:400;letter-spacing:0.000px;">90</div>
<div class="t" style="left:1445.40px;top:729.43px;font-size:25.00px;color:#555555;font-weight:400;letter-spacing:0.000px;">45</div>
<div class="t" style="left:1445.40px;top:792.43px;font-size:25.00px;color:#555555;font-weight:400;letter-spacing:0.000px;">0</div>
<div class="t" style="left:1025.96px;top:830.59px;font-size:25.29px;color:#555555;font-weight:400;letter-spacing:0.000px;transform:scaleX(0.8758);transform-origin:1.00px 0;">14:15</div>
<div class="t" style="left:1147.52px;top:830.59px;font-size:25.29px;color:#555555;font-weight:400;letter-spacing:0.000px;transform:scaleX(0.9887);transform-origin:1.00px 0;">14:50</div>
<div class="t" style="left:1273.03px;top:830.59px;font-size:25.29px;color:#555555;font-weight:400;letter-spacing:0.000px;transform:scaleX(1.0048);transform-origin:1.00px 0;">15:25</div>
<div class="t" style="left:1398.54px;top:830.59px;font-size:25.29px;color:#555555;font-weight:400;letter-spacing:0.000px;transform:scaleX(0.9887);transform-origin:1.00px 0;">16:00</div>
<div class="t" style="left:1635.90px;top:471.44px;font-size:25.58px;color:#222222;font-weight:500;letter-spacing:0.000px;transform:scaleX(1.1392);transform-origin:2.00px 0;-webkit-text-stroke:0.3px #222222;">Dialogs</div>
<div class="t" style="left:2065.10px;top:546.23px;font-size:25.00px;color:#555555;font-weight:400;letter-spacing:0.000px;">160</div>
<div class="t" style="left:2065.10px;top:603.43px;font-size:25.00px;color:#555555;font-weight:400;letter-spacing:0.000px;">120</div>
<div class="t" style="left:2065.10px;top:666.43px;font-size:25.00px;color:#555555;font-weight:400;letter-spacing:0.000px;">80</div>
<div class="t" style="left:2066.10px;top:729.43px;font-size:25.00px;color:#555555;font-weight:400;letter-spacing:0.000px;">40</div>
<div class="t" style="left:2066.10px;top:792.43px;font-size:25.00px;color:#555555;font-weight:400;letter-spacing:0.000px;">0</div>
<div class="t" style="left:1646.66px;top:830.59px;font-size:25.29px;color:#555555;font-weight:400;letter-spacing:0.000px;transform:scaleX(0.8758);transform-origin:1.00px 0;">14:15</div>
<div class="t" style="left:1768.22px;top:830.59px;font-size:25.29px;color:#555555;font-weight:400;letter-spacing:0.000px;transform:scaleX(0.9887);transform-origin:1.00px 0;">14:50</div>
<div class="t" style="left:1893.73px;top:830.59px;font-size:25.29px;color:#555555;font-weight:400;letter-spacing:0.000px;transform:scaleX(1.0048);transform-origin:1.00px 0;">15:25</div>
<div class="t" style="left:2019.24px;top:830.59px;font-size:25.29px;color:#555555;font-weight:400;letter-spacing:0.000px;transform:scaleX(0.9887);transform-origin:1.00px 0;">16:00</div>
<div class="t" style="left:2257.30px;top:471.44px;font-size:25.58px;color:#222222;font-weight:500;letter-spacing:0.000px;transform:scaleX(1.1589);transform-origin:1.00px 0;-webkit-text-stroke:0.3px #222222;">miniApp Invocations</div>
<div class="t" style="left:2686.50px;top:546.23px;font-size:25.00px;color:#555555;font-weight:400;letter-spacing:0.000px;">3K</div>
<div class="t" style="left:2686.50px;top:603.43px;font-size:25.00px;color:#555555;font-weight:400;letter-spacing:0.000px;">3K</div>
<div class="t" style="left:2685.50px;top:666.43px;font-size:25.00px;color:#555555;font-weight:400;letter-spacing:0.000px;">2K</div>
<div class="t" style="left:2685.50px;top:729.43px;font-size:25.00px;color:#555555;font-weight:400;letter-spacing:0.000px;">850</div>
<div class="t" style="left:2686.50px;top:792.43px;font-size:25.00px;color:#555555;font-weight:400;letter-spacing:0.000px;">0</div>
<div class="t" style="left:2267.06px;top:830.59px;font-size:25.29px;color:#555555;font-weight:400;letter-spacing:0.000px;transform:scaleX(0.8758);transform-origin:1.00px 0;">14:15</div>
<div class="t" style="left:2388.62px;top:830.59px;font-size:25.29px;color:#555555;font-weight:400;letter-spacing:0.000px;transform:scaleX(0.9887);transform-origin:1.00px 0;">14:50</div>
<div class="t" style="left:2514.13px;top:830.59px;font-size:25.29px;color:#555555;font-weight:400;letter-spacing:0.000px;transform:scaleX(1.0048);transform-origin:1.00px 0;">15:25</div>
<div class="t" style="left:2639.64px;top:830.59px;font-size:25.29px;color:#555555;font-weight:400;letter-spacing:0.000px;transform:scaleX(0.9887);transform-origin:1.00px 0;">16:00</div>
<div class="t" style="left:1016.20px;top:1042.44px;font-size:25.58px;color:#222222;font-weight:500;letter-spacing:0.000px;transform:scaleX(1.1335);transform-origin:1.00px 0;-webkit-text-stroke:0.3px #222222;">miniApps Events</div>
<div class="t" style="left:1444.40px;top:1117.23px;font-size:25.00px;color:#555555;font-weight:400;letter-spacing:0.000px;">120</div>
<div class="t" style="left:1444.40px;top:1174.43px;font-size:25.00px;color:#555555;font-weight:400;letter-spacing:0.000px;">90</div>
<div class="t" style="left:1444.40px;top:1237.43px;font-size:25.00px;color:#555555;font-weight:400;letter-spacing:0.000px;">60</div>
<div class="t" style="left:1445.40px;top:1300.43px;font-size:25.00px;color:#555555;font-weight:400;letter-spacing:0.000px;">30</div>
<div class="t" style="left:1445.40px;top:1363.43px;font-size:25.00px;color:#555555;font-weight:400;letter-spacing:0.000px;">0</div>
<div class="t" style="left:1025.96px;top:1401.59px;font-size:25.29px;color:#555555;font-weight:400;letter-spacing:0.000px;transform:scaleX(0.8758);transform-origin:1.00px 0;">14:15</div>
<div class="t" style="left:1147.52px;top:1401.59px;font-size:25.29px;color:#555555;font-weight:400;letter-spacing:0.000px;transform:scaleX(0.9887);transform-origin:1.00px 0;">14:50</div>
<div class="t" style="left:1273.03px;top:1401.59px;font-size:25.29px;color:#555555;font-weight:400;letter-spacing:0.000px;transform:scaleX(1.0048);transform-origin:1.00px 0;">15:25</div>
<div class="t" style="left:1398.54px;top:1401.59px;font-size:25.29px;color:#555555;font-weight:400;letter-spacing:0.000px;transform:scaleX(0.9887);transform-origin:1.00px 0;">16:00</div>
<div class="t" style="left:1635.90px;top:1042.44px;font-size:25.58px;color:#222222;font-weight:500;letter-spacing:0.000px;transform:scaleX(1.1456);transform-origin:2.00px 0;-webkit-text-stroke:0.3px #222222;">End type reports</div>
<div class="t" style="left:2065.10px;top:1117.23px;font-size:25.00px;color:#555555;font-weight:400;letter-spacing:0.000px;">100%</div>
<div class="t" style="left:2065.10px;top:1174.43px;font-size:25.00px;color:#555555;font-weight:400;letter-spacing:0.000px;">75%</div>
<div class="t" style="left:2065.10px;top:1237.43px;font-size:25.00px;color:#555555;font-weight:400;letter-spacing:0.000px;">50%</div>
<div class="t" style="left:2065.10px;top:1300.43px;font-size:25.00px;color:#555555;font-weight:400;letter-spacing:0.000px;">25%</div>
<div class="t" style="left:2066.10px;top:1363.43px;font-size:25.00px;color:#555555;font-weight:400;letter-spacing:0.000px;">0%</div>
<div class="t" style="left:1646.66px;top:1401.59px;font-size:25.29px;color:#555555;font-weight:400;letter-spacing:0.000px;transform:scaleX(0.8758);transform-origin:1.00px 0;">14:15</div>
<div class="t" style="left:1768.22px;top:1401.59px;font-size:25.29px;color:#555555;font-weight:400;letter-spacing:0.000px;transform:scaleX(0.9887);transform-origin:1.00px 0;">14:50</div>
<div class="t" style="left:1893.73px;top:1401.59px;font-size:25.29px;color:#555555;font-weight:400;letter-spacing:0.000px;transform:scaleX(1.0048);transform-origin:1.00px 0;">15:25</div>
<div class="t" style="left:2019.24px;top:1401.59px;font-size:25.29px;color:#555555;font-weight:400;letter-spacing:0.000px;transform:scaleX(0.9887);transform-origin:1.00px 0;">16:00</div>
<div class="t" style="left:2257.30px;top:1042.44px;font-size:25.58px;color:#222222;font-weight:500;letter-spacing:0.000px;transform:scaleX(1.1112);transform-origin:1.00px 0;-webkit-text-stroke:0.3px #222222;">miniApp Success rate</div>
<div class="t" style="left:2685.50px;top:1117.23px;font-size:25.00px;color:#555555;font-weight:400;letter-spacing:0.000px;">100%</div>
<div class="t" style="left:2685.50px;top:1174.43px;font-size:25.00px;color:#555555;font-weight:400;letter-spacing:0.000px;">75%</div>
<div class="t" style="left:2685.50px;top:1237.43px;font-size:25.00px;color:#555555;font-weight:400;letter-spacing:0.000px;">50%</div>
<div class="t" style="left:2685.50px;top:1300.43px;font-size:25.00px;color:#555555;font-weight:400;letter-spacing:0.000px;">25%</div>
<div class="t" style="left:2686.50px;top:1363.43px;font-size:25.00px;color:#555555;font-weight:400;letter-spacing:0.000px;">0%</div>
<div class="t" style="left:2267.06px;top:1401.59px;font-size:25.29px;color:#555555;font-weight:400;letter-spacing:0.000px;transform:scaleX(0.8758);transform-origin:1.00px 0;">14:15</div>
<div class="t" style="left:2388.62px;top:1401.59px;font-size:25.29px;color:#555555;font-weight:400;letter-spacing:0.000px;transform:scaleX(0.9887);transform-origin:1.00px 0;">14:50</div>
<div class="t" style="left:2514.13px;top:1401.59px;font-size:25.29px;color:#555555;font-weight:400;letter-spacing:0.000px;transform:scaleX(1.0048);transform-origin:1.00px 0;">15:25</div>
<div class="t" style="left:2639.64px;top:1401.59px;font-size:25.29px;color:#555555;font-weight:400;letter-spacing:0.000px;transform:scaleX(0.9887);transform-origin:1.00px 0;">16:00</div>
<div class="t" style="left:1063.90px;top:889.52px;font-size:20.64px;color:#1b1b1b;font-weight:400;letter-spacing:0.000px;transform:scaleX(1.1192);transform-origin:1.00px 0;">Initiated</div>
<div class="t" style="left:1682.60px;top:889.52px;font-size:20.64px;color:#1b1b1b;font-weight:400;letter-spacing:0.000px;transform:scaleX(1.1133);transform-origin:1.00px 0;">Completed</div>
<div class="t" style="left:1902.80px;top:889.52px;font-size:20.64px;color:#1b1b1b;font-weight:400;letter-spacing:0.000px;transform:scaleX(1.0459);transform-origin:0.00px 0;">Transferred</div>
<div class="t" style="left:1683.60px;top:928.52px;font-size:20.64px;color:#1b1b1b;font-weight:400;letter-spacing:0.000px;transform:scaleX(1.1127);transform-origin:0.00px 0;">Terminated</div>
<div class="t" style="left:2304.00px;top:889.52px;font-size:20.64px;color:#1b1b1b;font-weight:400;letter-spacing:0.000px;transform:scaleX(1.0934);transform-origin:0.00px 0;">Total</div>
<div class="t" style="left:2460.00px;top:889.52px;font-size:20.64px;color:#1b1b1b;font-weight:400;letter-spacing:0.000px;transform:scaleX(1.0348);transform-origin:0.00px 0;">Successful</div>
<div class="t" style="left:2304.00px;top:928.52px;font-size:20.64px;color:#1b1b1b;font-weight:400;letter-spacing:0.000px;transform:scaleX(1.0420);transform-origin:0.00px 0;">System Errors</div>
<div class="t" style="left:2547.70px;top:928.52px;font-size:20.64px;color:#1b1b1b;font-weight:400;letter-spacing:0.000px;transform:scaleX(1.0684);transform-origin:1.00px 0;">Critical Error</div>
<div style="position:absolute;left:864px;top:1378px;width:2012px;height:72px;background:linear-gradient(180deg,rgba(255,255,255,0) 0%,rgba(0,0,0,0.09) 100%);-webkit-mask-image:linear-gradient(90deg,#000 0%,#000 93%,rgba(0,0,0,0.25) 100%)"></div>
<div style="position:absolute;left:2873px;top:1447px;width:3px;height:3px;background:#1d3346;border-top-left-radius:3px"></div>
</body></html>
